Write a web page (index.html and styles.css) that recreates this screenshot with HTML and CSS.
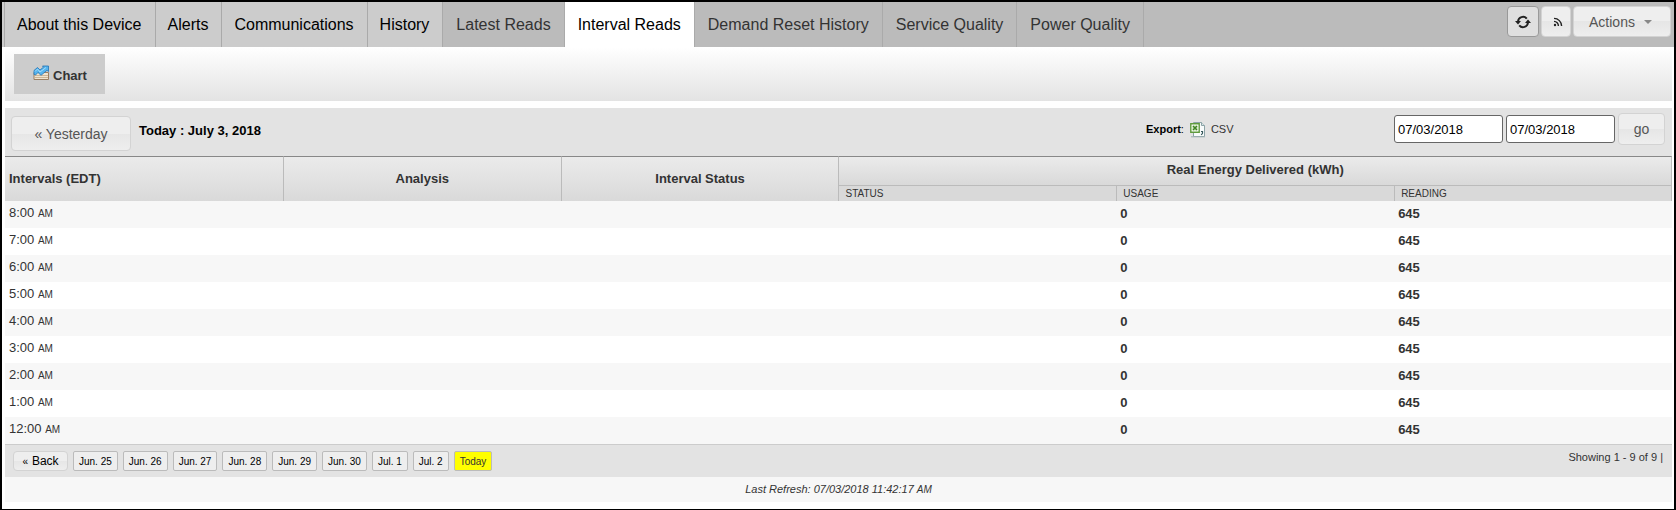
FILE: index.html
```html
<!DOCTYPE html>
<html lang="en">
<head>
<meta charset="utf-8">
<title>Interval Reads</title>
<link rel="stylesheet" href="styles.css">
</head>
<body>
<header class="topbar">
  <nav class="tabs">
    <a class="tab" href="#">About this Device</a>
    <a class="tab" href="#">Alerts</a>
    <a class="tab" href="#">Communications</a>
    <a class="tab" href="#">History</a>
    <a class="tab tab-sub" href="#">Latest Reads</a>
    <a class="tab tab-sub tab-active" href="#" aria-current="page">Interval Reads</a>
    <a class="tab tab-sub" href="#">Demand Reset History</a>
    <a class="tab tab-sub" href="#">Service Quality</a>
    <a class="tab tab-sub tab-last" href="#">Power Quality</a>
  </nav>
  <div class="tools">
    <button class="btn btn-icon btn-refresh" type="button" aria-label="Refresh">
      <svg width="16" height="14" viewBox="0 0 16 14" fill="none" stroke="#222" stroke-width="2">
        <path d="M3 6.5A5 5 0 0 1 11.8 3.6"/><path d="M13 7.5A5 5 0 0 1 4.2 10.4"/>
        <path d="M0 6h6L3 9.6z" fill="#222" stroke="none"/><path d="M10 8h6L13 4.4z" fill="#222" stroke="none"/>
      </svg>
    </button>
    <button class="btn btn-icon" type="button" aria-label="Feed">
      <svg class="feed" width="10" height="10" viewBox="0 0 10 10" fill="none" stroke="#222" stroke-width="1.4">
        <circle cx="2" cy="8" r="1.2" fill="#222" stroke="none"/>
        <path d="M1 4.4A4.4 4.4 0 0 1 5.4 9M1 1.4A7.6 7.6 0 0 1 8.6 9"/>
      </svg>
    </button>
    <button class="btn btn-actions" type="button">Actions
      <svg width="8" height="4" viewBox="0 0 8 4"><path d="M0 0h8L4 4z" fill="#888"/></svg>
    </button>
  </div>
</header>
<main class="content">
  <div class="subbar">
    <a class="chart-link" href="#">
      <svg width="17" height="16" viewBox="0 0 17 16">
        <path d="M1 7.5h14.500V14.500H1z" fill="#efe3cf" stroke="#9b7f62"/>
        <path d="M2 10.500h13M2 12.500h13" stroke="#cbb596"/>
        <path d="M1 9.500V5.500L4.500 2.500 7 5 10.500 2.200 9.500 1H15.500V6.500L14 5.300 8 10.300 5 7.500 2.500 10z" fill="#55b4ee" stroke="#2274b5" stroke-width=".8"/>
        <path d="M2 6.500l2.500-2.500L7 7l6-4.500" fill="none" stroke="#a5dcfa"/>
      </svg>
      <span>Chart</span>
    </a>
  </div>
  <form class="filterbar">
    <button class="btn btn-day" type="button">« Yesterday</button>
    <h1 class="day">Today : July 3, 2018</h1>
    <div class="export">
      <span><b>Export</b>:</span>
      <a class="csv" href="#">
        <svg width="16" height="17" viewBox="0 0 16 17">
          <path d="M3.500 1.500h8l3 3V15.500h-11z" fill="#f8fbfb" stroke="#8ba3a6"/>
          <path d="M11.500 1.500v3h3" fill="#dce8ea" stroke="#8ba3a6"/>
          <path d="M1 15.800h14" stroke="#9fb0b2"/>
          <path d="M.8 2.800h8.400v8.400H.8z" fill="#fff" stroke="#5f9b3c" stroke-width="1.400"/>
          <path d="M2.500 4.500h5v5h-5z" fill="#b8dba0"/>
          <path d="M3 5l4 4M7 5L3 9" stroke="#3f8124" stroke-width="1.300"/>
          <path d="M11 10.500h1.500v1.800L11.200 14" fill="none" stroke="#37595d" stroke-width="1.200"/>
        </svg>
        <span>CSV</span>
      </a>
    </div>
    <div class="range">
      <input class="date" type="text" value="07/03/2018" aria-label="Start date">
      <input class="date" type="text" value="07/03/2018" aria-label="End date">
      <button class="btn btn-go" type="button">go</button>
    </div>
  </form>
  <table class="reads">
    <thead>
      <tr class="head">
        <th class="first" rowspan="2">Intervals (EDT)</th>
        <th rowspan="2">Analysis</th>
        <th rowspan="2">Interval Status</th>
        <th class="group" colspan="3">Real Energy Delivered (kWh)</th>
      </tr>
      <tr class="subhead"><th>STATUS</th><th>USAGE</th><th>READING</th></tr>
    </thead>
    <tbody>
      <tr><td>8:00 <small>AM</small></td><td></td><td></td><td></td><td class="num">0</td><td class="num">645</td></tr>
      <tr><td>7:00 <small>AM</small></td><td></td><td></td><td></td><td class="num">0</td><td class="num">645</td></tr>
      <tr><td>6:00 <small>AM</small></td><td></td><td></td><td></td><td class="num">0</td><td class="num">645</td></tr>
      <tr><td>5:00 <small>AM</small></td><td></td><td></td><td></td><td class="num">0</td><td class="num">645</td></tr>
      <tr><td>4:00 <small>AM</small></td><td></td><td></td><td></td><td class="num">0</td><td class="num">645</td></tr>
      <tr><td>3:00 <small>AM</small></td><td></td><td></td><td></td><td class="num">0</td><td class="num">645</td></tr>
      <tr><td>2:00 <small>AM</small></td><td></td><td></td><td></td><td class="num">0</td><td class="num">645</td></tr>
      <tr><td>1:00 <small>AM</small></td><td></td><td></td><td></td><td class="num">0</td><td class="num">645</td></tr>
      <tr><td>12:00 <small>AM</small></td><td></td><td></td><td></td><td class="num">0</td><td class="num">645</td></tr>
    </tbody>
  </table>
  <div class="pager">
    <div class="days">
      <button class="btn btn-back" type="button"><small>«</small> Back</button>
      <button class="chip" type="button">Jun. 25</button>
      <button class="chip" type="button">Jun. 26</button>
      <button class="chip" type="button">Jun. 27</button>
      <button class="chip" type="button">Jun. 28</button>
      <button class="chip" type="button">Jun. 29</button>
      <button class="chip" type="button">Jun. 30</button>
      <button class="chip" type="button">Jul. 1</button>
      <button class="chip" type="button">Jul. 2</button>
      <button class="chip chip-today" type="button">Today</button>
    </div>
    <span class="showing">Showing 1 - 9 of 9 |</span>
  </div>
  <footer class="refreshed">Last Refresh: 07/03/2018 11:42:17 <small>AM</small></footer>
</main>
</body>
</html>
```
FILE: styles.css
```css
* { box-sizing: border-box; }
body {
  margin: 0;
  min-height: 100vh;
  border: 2px solid #000;
  background: #fff;
  color: #333;
  font: 13px/16px "Liberation Sans", Arial, sans-serif;
}
button, input { font-family: inherit; }
a { color: inherit; text-decoration: none; }
svg { display: block; flex: none; }

.topbar {
  display: flex;
  justify-content: space-between;
  align-items: flex-start;
  padding-left: 2px;
  background: linear-gradient(90deg, #ccc 2px, #bbb 2px);
}
.tabs { display: flex; }
.tab {
  padding: 0 13px 0 12px;
  border-left: 1px solid #aaa;
  background: #ccc;
  color: #000;
  font-size: 16px;
  line-height: 45px;
  white-space: nowrap;
}
.tab-sub { padding-left: 13px; background: #bbb; color: #333; }
.tab-active { background: #fff; color: #000; }
.tab-last { border-right: 1px solid #aaa; }

.tools { display: flex; gap: 2px; padding: 4px 3px 0 0; }
.btn {
  display: flex;
  align-items: center;
  justify-content: center;
  padding: 0;
  border: 1px solid #d3d3d3;
  border-radius: 4px;
  background: linear-gradient(#eee 50%, #e6e6e6 50%, #eee);
  color: #555;
  font-size: 14px;
}
.btn-icon { width: 30px; height: 31px; }
.btn-refresh { width: 32px; border-color: #999; background: #dfdfdf; }
.feed { margin-left: 3px; }
.btn-actions { width: 98px; height: 31px; gap: 9px; padding-right: 3px; }

.content { padding: 0 2px 7px 3px; }
.subbar {
  display: flex;
  padding: 7px 9px;
  margin-bottom: 7px;
  background: linear-gradient(#fff, #e3e3e3);
}
.chart-link {
  display: flex;
  align-items: center;
  gap: 3px;
  height: 40px;
  padding: 0 18px 0 19px;
  background: #ccc;
  font-weight: bold;
}
.chart-link svg { margin-bottom: 2px; }
.chart-link span { padding-top: 3px; }

.filterbar {
  display: grid;
  grid-template-columns: 120px 1fr 247px auto;
  gap: 8px;
  height: 48px;
  padding: 5px 7px 0 6px;
  background: #e3e3e3;
}
.btn-day { height: 35px; margin-top: 3px; }
.day { margin: 10px 0 0; color: #000; font-size: 13px; line-height: 16px; }
.export {
  display: flex;
  align-items: center;
  gap: 6px;
  height: 32px;
  padding-left: 7px;
  color: #000;
  font-size: 11px;
}
.csv { display: flex; align-items: center; gap: 5px; color: #333; }
.range { display: flex; align-items: center; gap: 3px; height: 32px; }
.date {
  width: 109px;
  height: 28px;
  padding: 0 3px;
  border: 1px solid #666;
  border-radius: 3px;
  background: #fff;
  color: #000;
  font-size: 13px;
}
.btn-go { width: 47px; height: 32px; }

.reads { width: 100%; border-collapse: separate; border-spacing: 0; table-layout: fixed; }
.reads th { padding: 0; border-left: 1px solid #bbb; }
.head { height: 29px; }
.head th { border-top: 1px solid #888; background: linear-gradient(#ebebeb, #d9d9d9); }
.reads .first { padding-left: 4px; border-left: 0; text-align: left; }
.head .group { padding-bottom: 3px; }
.subhead { height: 16px; }
.reads .subhead th {
  padding: 0 6px;
  border-top: 1px solid #bbb;
  background: #d9d9d9;
  font-size: 10px;
  font-weight: normal;
  line-height: 14px;
  text-align: left;
}
.reads th:last-child { border-right: 1px solid #bbb; }
.reads td { height: 27px; padding: 0 4px 2px; }
.reads tbody tr:nth-child(odd) { background: #f7f7f7; }
.reads small { font-size: 10px; }
.num { font-weight: bold; }

.pager {
  display: flex;
  justify-content: space-between;
  height: 33px;
  padding: 6px 9px 0 8px;
  border-top: 1px solid #ccc;
  background: #e3e3e3;
}
.days { display: flex; gap: 5px; }
.btn-back { width: 55px; height: 20px; gap: 4px; color: #000; font-size: 12px; }
.btn-back small { font-size: 10px; }
.chip {
  height: 20px;
  padding: 0 5px;
  border: 1px solid #bbb;
  border-radius: 2px;
  background: #eee;
  color: #000;
  font-size: 10px;
}
.chip-today { background: #ff0; color: #333; }
.showing { font-size: 11px; line-height: 13px; }
.refreshed {
  background: #f7f7f7;
  font-size: 11px;
  font-style: italic;
  line-height: 24px;
  text-align: center;
}
.refreshed small { font-size: 10px; }
```
